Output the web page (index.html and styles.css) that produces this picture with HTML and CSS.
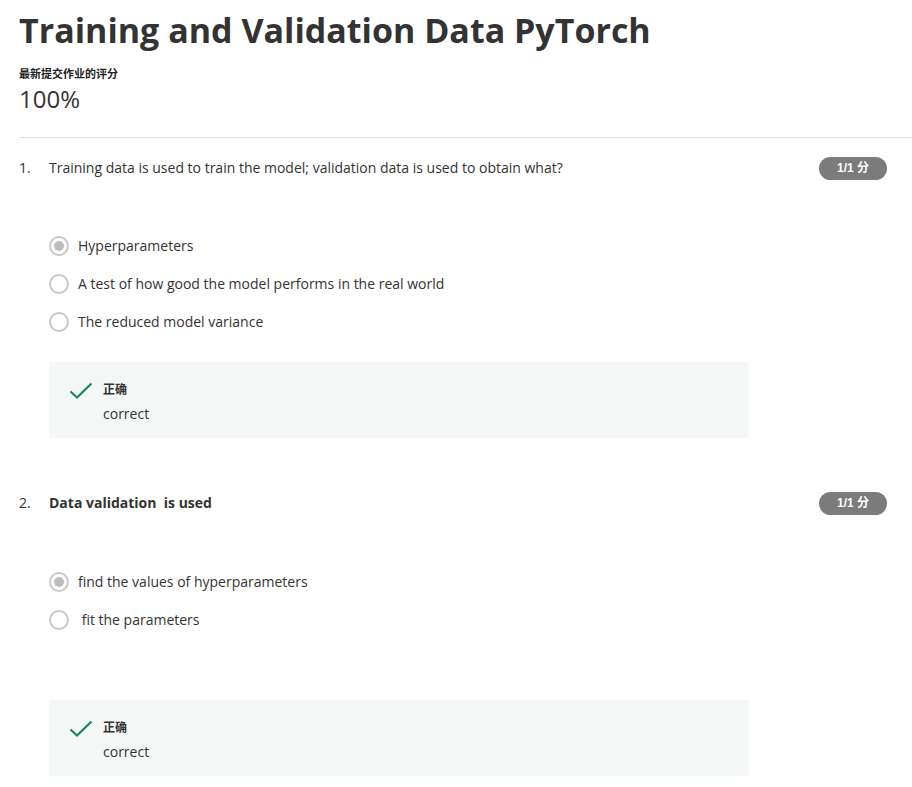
FILE: index.html
```html
<!DOCTYPE html>
<html lang="zh">
<head>
<meta charset="utf-8">
<title>Training and Validation Data PyTorch</title>
<link rel="stylesheet" href="styles.css">
</head>
<body>
<div class="page">
  <header class="head">
    <h1 class="title">Training and Validation Data PyTorch</h1>
    <div class="grade-label">最新提交作业的评分</div>
    <div class="grade">100%</div>
  </header>
  <div class="divider"></div>

  <section class="question q1">
    <div class="q-row">
      <span class="q-num">1.</span>
      <span class="q-text">Training data is used to train the model; validation data is used to obtain what?</span>
      <span class="badge">1/1 分</span>
    </div>
    <div class="options">
      <div class="option"><span class="radio checked"></span><span class="opt-text">Hyperparameters</span></div>
      <div class="option"><span class="radio"></span><span class="opt-text">A test of how good the model performs in the real world</span></div>
      <div class="option"><span class="radio"></span><span class="opt-text">The reduced model variance</span></div>
    </div>
    <div class="feedback">
      <svg class="check" width="24" height="18" viewBox="0 0 24 18"><path d="M1.5 9.5 L8 15.5 L22.5 1.5" fill="none" stroke="#1f8354" stroke-width="2.2"/></svg>
      <div class="fb-body">
        <div class="fb-title">正确</div>
        <div class="fb-text">correct</div>
      </div>
    </div>
  </section>

  <section class="question q2">
    <div class="q-row">
      <span class="q-num">2.</span>
      <span class="q-text bold">Data validation&nbsp; is used</span>
      <span class="badge">1/1 分</span>
    </div>
    <div class="options">
      <div class="option"><span class="radio checked"></span><span class="opt-text">find the values of hyperparameters</span></div>
      <div class="option"><span class="radio"></span><span class="opt-text">&nbsp;fit the parameters</span></div>
    </div>
    <div class="feedback">
      <svg class="check" width="24" height="18" viewBox="0 0 24 18"><path d="M1.5 9.5 L8 15.5 L22.5 1.5" fill="none" stroke="#1f8354" stroke-width="2.2"/></svg>
      <div class="fb-body">
        <div class="fb-title">正确</div>
        <div class="fb-text">correct</div>
      </div>
    </div>
  </section>
</div>
</body>
</html>
```

FILE: styles.css
```css
html, body {
  margin: 0;
  padding: 0;
  background: #fff;
}
body {
  font-family: "Open Sans", "Noto Sans CJK SC", sans-serif;
  color: #333;
}
.page {
  padding-left: 19px;
}
.head {
  padding-top: 6px;
}
.title {
  margin: 0;
  font-size: 34px;
  line-height: 48px;
  font-weight: 700;
  color: #333;
}
.grade-label {
  margin-top: 12px;
  font-size: 11px;
  line-height: 16px;
  font-weight: 700;
  color: #222;
}
.grade {
  margin-top: 2px;
  font-size: 24px;
  line-height: 30px;
  color: #333;
}
.divider {
  margin-top: 23px;
  height: 1px;
  background: #ddd;
}
.question {
  padding-top: 19px;
}
.q-row {
  display: flex;
  align-items: flex-start;
}
.q-num {
  width: 30px;
  font-size: 14px;
  line-height: 22px;
}
.q-text {
  flex: 1;
  font-size: 14px;
  line-height: 22px;
  color: #333;
}
.q-text.bold {
  font-weight: 700;
}
.badge {
  margin-right: 25px;
  width: 68px;
  height: 23px;
  border-radius: 12px;
  background: #7b7b7b;
  color: #fff;
  font-family: "Liberation Sans", "Noto Sans CJK SC", sans-serif;
  font-size: 12px;
  font-weight: 700;
  line-height: 23px;
  text-align: center;
}
.options {
  padding-left: 30px;
  margin-top: 55px;
  display: flex;
  flex-direction: column;
  gap: 16px;
}
.option {
  display: flex;
  align-items: center;
  height: 22px;
}
.radio {
  box-sizing: border-box;
  width: 20px;
  height: 20px;
  border-radius: 50%;
  border: 2px solid #c8c8c8;
  margin-right: 9px;
  position: relative;
  flex: none;
}
.radio.checked::after {
  content: "";
  position: absolute;
  left: 3px;
  top: 3px;
  width: 10px;
  height: 10px;
  border-radius: 50%;
  background: #bdbdbd;
}
.opt-text {
  font-size: 14px;
  line-height: 22px;
  color: #333;
}
.feedback {
  margin-left: 30px;
  width: 700px;
  height: 76px;
  box-sizing: border-box;
  background: #f3f8f6;
  display: flex;
  align-items: flex-start;
  padding: 20px 0 0 20px;
}
.check {
  margin-top: 0;
  margin-right: 10px;
  flex: none;
}
.fb-title {
  font-size: 12px;
  font-weight: 700;
  line-height: 16px;
  color: #333;
}
.fb-text {
  margin-top: 6px;
  font-size: 14px;
  line-height: 20px;
  color: #333;
}
.q1 .feedback {
  margin-top: 29px;
}
.q2 {
  padding-top: 54px;
}
.q2 .options {
  margin-top: 56px;
}
.q2 .feedback {
  margin-top: 69px;
}
```
